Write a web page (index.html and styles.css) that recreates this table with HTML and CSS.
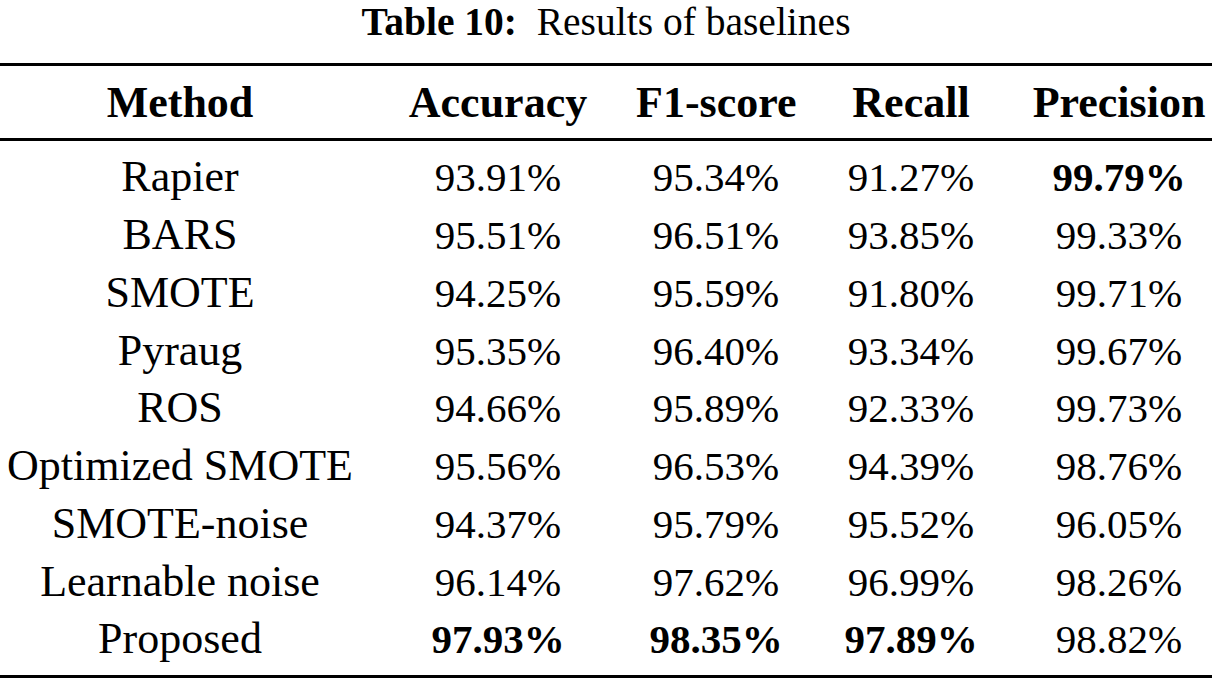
FILE: index.html
```html
<!DOCTYPE html>
<html lang="en">
<head>
<meta charset="utf-8">
<title>Table 10: Results of baselines</title>
<link rel="stylesheet" href="styles.css">
</head>
<body>
<div class="page">
  <p class="caption"><span class="caption-label">Table 10:</span><span class="caption-text">Results of baselines</span></p>
  <div class="table">
    <div class="rule"></div>
    <div class="head">
      <div class="row">
        <div class="cell">Method</div>
        <div class="cell">Accuracy</div>
        <div class="cell">F1-score</div>
        <div class="cell">Recall</div>
        <div class="cell">Precision</div>
      </div>
    </div>
    <div class="rule"></div>
    <div class="body">
      <div class="row">
        <div class="cell name">Rapier</div>
        <div class="cell num">93.91%</div>
        <div class="cell num">95.34%</div>
        <div class="cell num">91.27%</div>
        <div class="cell num best">99.79%</div>
      </div>
      <div class="row">
        <div class="cell name">BARS</div>
        <div class="cell num">95.51%</div>
        <div class="cell num">96.51%</div>
        <div class="cell num">93.85%</div>
        <div class="cell num">99.33%</div>
      </div>
      <div class="row">
        <div class="cell name">SMOTE</div>
        <div class="cell num">94.25%</div>
        <div class="cell num">95.59%</div>
        <div class="cell num">91.80%</div>
        <div class="cell num">99.71%</div>
      </div>
      <div class="row">
        <div class="cell name">Pyraug</div>
        <div class="cell num">95.35%</div>
        <div class="cell num">96.40%</div>
        <div class="cell num">93.34%</div>
        <div class="cell num">99.67%</div>
      </div>
      <div class="row">
        <div class="cell name">ROS</div>
        <div class="cell num">94.66%</div>
        <div class="cell num">95.89%</div>
        <div class="cell num">92.33%</div>
        <div class="cell num">99.73%</div>
      </div>
      <div class="row">
        <div class="cell name">Optimized SMOTE</div>
        <div class="cell num">95.56%</div>
        <div class="cell num">96.53%</div>
        <div class="cell num">94.39%</div>
        <div class="cell num">98.76%</div>
      </div>
      <div class="row">
        <div class="cell name">SMOTE-noise</div>
        <div class="cell num">94.37%</div>
        <div class="cell num">95.79%</div>
        <div class="cell num">95.52%</div>
        <div class="cell num">96.05%</div>
      </div>
      <div class="row">
        <div class="cell name">Learnable noise</div>
        <div class="cell num">96.14%</div>
        <div class="cell num">97.62%</div>
        <div class="cell num">96.99%</div>
        <div class="cell num">98.26%</div>
      </div>
      <div class="row">
        <div class="cell name">Proposed</div>
        <div class="cell num best">97.93%</div>
        <div class="cell num best">98.35%</div>
        <div class="cell num best">97.89%</div>
        <div class="cell num">98.82%</div>
      </div>
    </div>
    <div class="rule"></div>
  </div>
</div>
</body>
</html>
```

FILE: styles.css
```css
html, body {
  margin: 0;
  padding: 0;
  background: #ffffff;
}

body {
  font-family: "Liberation Serif", "Times New Roman", serif;
  color: #000000;
  width: 1212px;
  height: 680px;
  overflow: hidden;
}

.page {
  display: flex;
  flex-direction: column;
}

.caption {
  margin: 0;
  text-align: center;
  font-size: 39.5px;
  line-height: 44px;
  height: 44px;
}

.caption-label {
  font-weight: bold;
  margin-right: 0.5em;
}

.table {
  margin-top: 19px;
  display: flex;
  flex-direction: column;
}

.rule {
  height: 3px;
  background: #000000;
}

.head {
  padding: 8px 0 6px;
}

.body {
  padding: 7.5px 0 6.75px;
}

.row {
  display: grid;
  grid-template-columns: 360px 276px 160px 230px 186px;
  align-items: baseline;
  height: 57.75px;
}

.cell {
  text-align: center;
  white-space: nowrap;
  font-size: 44px;
  line-height: 57.75px;
}

.head .cell {
  font-weight: bold;
}

.cell.num {
  font-size: 41px;
}

.cell.best {
  font-weight: bold;
}
```
